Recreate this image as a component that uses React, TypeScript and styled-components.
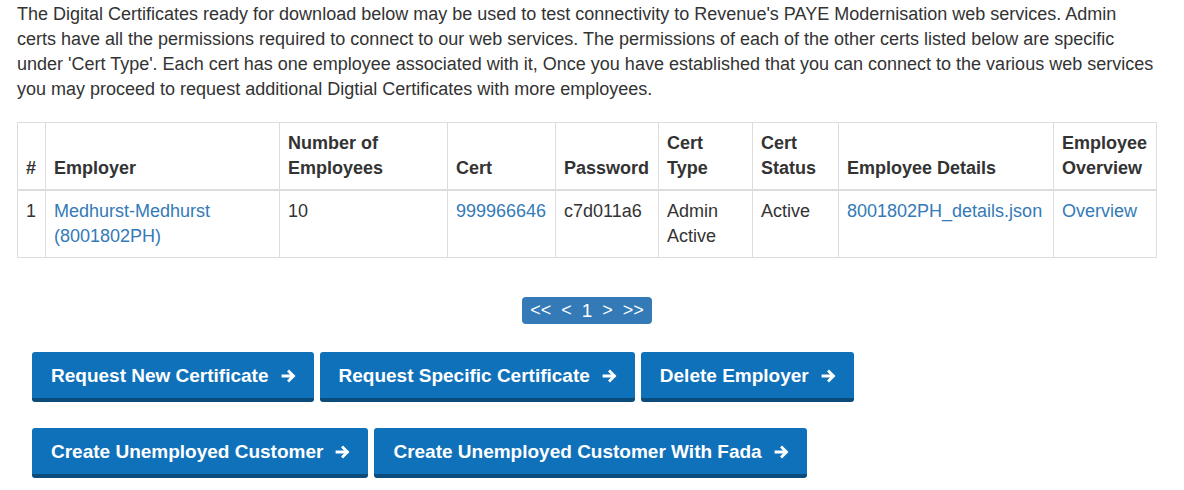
import * as React from 'react'
import styled, { createGlobalStyle } from 'styled-components'

const GlobalStyle = createGlobalStyle`
  body {
    margin: 0;
    background: #fff;
    font-family: "Liberation Sans", Arial, sans-serif;
    font-size: 18px;
    line-height: 25px;
    color: #333;
  }
`

const rows = [
  {
    index: 1,
    employer: 'Medhurst-Medhurst (8001802PH)',
    employees: '10',
    cert: '999966646',
    password: 'c7d011a6',
    certType: 'Admin Active',
    status: 'Active',
    details: '8001802PH_details.json',
    overview: 'Overview',
  },
]

const actions = [
  ['Request New Certificate', 'Request Specific Certificate', 'Delete Employer'],
  ['Create Unemployed Customer', 'Create Unemployed Customer With Fada'],
]

const App = () => {
  return (
    <>
      <GlobalStyle />
      <Page>
        <Intro>
          The Digital Certificates ready for download below may be used to test connectivity to Revenue's PAYE
          Modernisation web services. Admin certs have all the permissions required to connect to our web services. The
          permissions of each of the other certs listed below are specific under 'Cert Type'. Each cert has one employee
          associated with it, Once you have established that you can connect to the various web services you may
          proceed to request additional Digtial Certificates with more employees.
        </Intro>
        <CertTable>
          <thead>
            <tr>
              <Th $width={11}>#</Th>
              <Th $width={217}>Employer</Th>
              <Th $width={151}>Number of Employees</Th>
              <Th $width={91}>Cert</Th>
              <Th $width={86}>Password</Th>
              <Th $width={77}>Cert Type</Th>
              <Th $width={69}>Cert Status</Th>
              <Th $width={198}>Employee Details</Th>
              <Th>Employee Overview</Th>
            </tr>
          </thead>
          <tbody>
            {rows.map(r => (
              <tr key={r.index}>
                <Td>{r.index}</Td>
                <Td>
                  <TableLink href="#">{r.employer}</TableLink>
                </Td>
                <Td>{r.employees}</Td>
                <Td>
                  <TableLink href="#">{r.cert}</TableLink>
                </Td>
                <Td>{r.password}</Td>
                <Td>{r.certType}</Td>
                <Td>{r.status}</Td>
                <Td>
                  <TableLink href="#">{r.details}</TableLink>
                </Td>
                <Td>
                  <TableLink href="#">{r.overview}</TableLink>
                </Td>
              </tr>
            ))}
          </tbody>
        </CertTable>
        <PagerRow>
          <Pager>
            <PagerItem>&lt;&lt;</PagerItem>
            <PagerItem>&lt;</PagerItem>
            <PagerItem $current>1</PagerItem>
            <PagerItem>&gt;</PagerItem>
            <PagerItem>&gt;&gt;</PagerItem>
          </Pager>
        </PagerRow>
        <Actions>
          {actions.map((group, i) => (
            <ButtonRow key={i}>
              {group.map(label => (
                <ActionButton key={label}>
                  {label}
                  <Arrow viewBox="0 0 16 16">
                    <path d="M2 8h10M8 3.5L12.5 8 8 12.5" />
                  </Arrow>
                </ActionButton>
              ))}
            </ButtonRow>
          ))}
        </Actions>
      </Page>
    </>
  )
}
export default App

const Page = styled.div`
  width: 1140px;
  padding: 2px 17px 0;
`
const Intro = styled.p`
  margin: 0 0 20px;
`
const CertTable = styled.table`
  width: 1140px;
  border-collapse: collapse;
  border: 1px solid #ddd;
`
const Th = styled.th<{ $width?: number }>`
  width: ${p => (p.$width ? `${p.$width}px` : 'auto')};
  text-align: left;
  vertical-align: bottom;
  padding: 8px;
  border: 1px solid #ddd;
  border-bottom-width: 2px;
  font-weight: bold;
`
const Td = styled.td`
  vertical-align: top;
  padding: 8px;
  border: 1px solid #ddd;
`
const TableLink = styled.a`
  color: #337ab7;
  text-decoration: none;
`
const PagerRow = styled.div`
  display: flex;
  justify-content: center;
  margin-top: 39px;
`
const Pager = styled.div`
  display: flex;
  align-items: center;
  gap: 10px;
  height: 27px;
  padding: 0 8px;
  background: #337ab7;
  border-radius: 4px;
  color: #fff;
  font-size: 18px;
`
const PagerItem = styled.span<{ $current?: boolean }>`
  font-size: ${p => (p.$current ? '19px' : '18px')};
`
const Actions = styled.div`
  display: flex;
  flex-direction: column;
  gap: 26px;
  margin-top: 28px;
  padding-left: 15px;
`
const ButtonRow = styled.div`
  display: flex;
  gap: 6px;
`
const ActionButton = styled.button`
  display: flex;
  align-items: center;
  gap: 12px;
  height: 50px;
  padding: 1px 17px 0 19px;
  background: #0f71ba;
  border: none;
  border-bottom: 4px solid #0b4c7c;
  border-radius: 3px;
  color: #fff;
  font-family: "Liberation Sans", Arial, sans-serif;
  font-size: 19px;
  font-weight: bold;
  cursor: pointer;
`
const Arrow = styled.svg`
  width: 16px;
  height: 16px;
  fill: none;
  stroke: #fff;
  stroke-width: 2.8;
  stroke-linecap: square;
`
